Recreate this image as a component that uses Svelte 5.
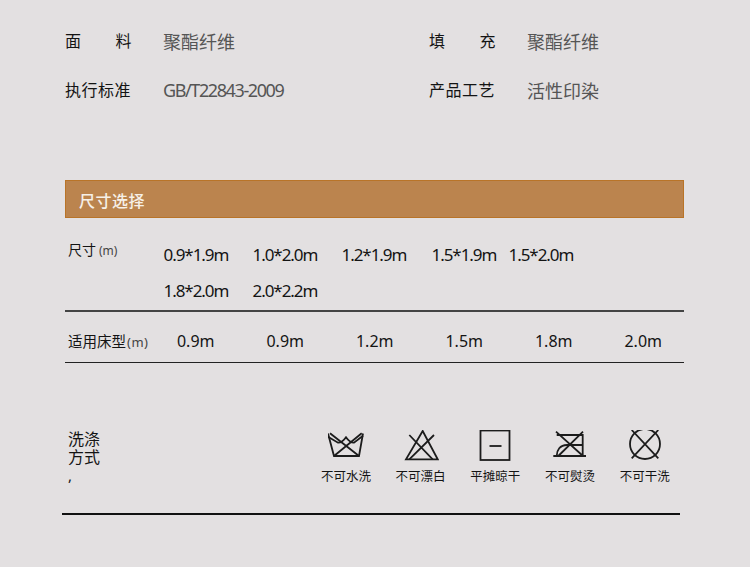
<script>
  const specs = [
    [
      { label: ["面", "料"], value: "聚酯纤维" },
      { label: ["执行标准"], value: "GB/T22843-2009", latin: true },
    ],
    [
      { label: ["填", "充"], value: "聚酯纤维" },
      { label: ["产品工艺"], value: "活性印染" },
    ],
  ];
  const sizes = ["0.9*1.9m", "1.0*2.0m", "1.2*1.9m", "1.5*1.9m", "1.5*2.0m", "1.8*2.0m", "2.0*2.2m"];
  const beds = ["0.9m", "0.9m", "1.2m", "1.5m", "1.8m", "2.0m"];
  const care = [
    { label: "不可水洗", kind: "wash" },
    { label: "不可漂白", kind: "bleach" },
    { label: "平摊晾干", kind: "dry" },
    { label: "不可熨烫", kind: "iron" },
    { label: "不可干洗", kind: "clean" },
  ];
</script>

<main class="page">
  <section class="specs">
    {#each specs as column}
      <div class="specs__column">
        {#each column as item}
          <div class="specs__row">
            <span class="specs__label">
              {#each item.label as part}
                <span>{part}</span>
              {/each}
            </span>
            <span class="specs__value" class:specs__value--latin={item.latin}>{item.value}</span>
          </div>
        {/each}
      </div>
    {/each}
  </section>

  <h2 class="bar">尺寸选择</h2>

  <section class="sizes">
    <div class="sizes__title">尺寸<small>(m)</small></div>
    <div class="sizes__grid">
      {#each sizes as size}
        <span>{size}</span>
      {/each}
    </div>
  </section>

  <section class="beds">
    <div class="beds__title">适用床型<small>(m)</small></div>
    <div class="beds__grid">
      {#each beds as bed}
        <span>{bed}</span>
      {/each}
    </div>
  </section>

  <section class="care">
    <div class="care__title">
      <div>洗涤</div>
      <div>方式</div>
      <div class="care__mark">,</div>
    </div>
    <div class="care__items">
      {#each care as item}
        <div class="care__item">
          <svg viewBox="0 0 36 32" width="36" height="32" fill="none" stroke="#1c1c1c" stroke-width="1.8" aria-hidden="true">
            {#if item.kind === "wash"}
              <path d="M0 3.500L6 26h25l4-22.500" />
              <path d="M0 6.700L10 12.700Q14 13 18 7.300Q22 13 26 12.700L35 5.700" />
              <path d="M2 3.300L31 26M33.700 3.300L6 26" />
            {:else if item.kind === "bleach"}
              <path d="M19.700 1L3 29.300h31.700z" />
              <path d="M6.300 5L29.700 29.300M31 5L6.300 29.300" />
            {:else if item.kind === "dry"}
              <rect x="3.500" y="0.500" width="29" height="29.500" />
              <path d="M12.500 16h12" />
            {:else if item.kind === "iron"}
              <path d="M1.300 26H34" />
              <path d="M4.700 26C4.700 20 8 15 15 15H30.700" />
              <path d="M4.700 5H30.700V26" />
              <path d="M4 1.700L31 26M31 1.700L6.300 26" />
            {:else}
              <circle cx="18" cy="14" r="15" />
              <path d="M4.700 0L31.300 28.300M31.300 0L4.700 28.300" />
            {/if}
          </svg>
          <span>{item.label}</span>
        </div>
      {/each}
    </div>
  </section>

  <div class="closing"></div>
</main>

<style>
  :global(body) {
    margin: 0;
    background: #e3e0e1;
  }

  .page {
    width: 750px;
    height: 567px;
    box-sizing: border-box;
    padding: 0 66px 0 65px;
    overflow: hidden;
    color: #141414;
    font-family: "Noto Sans", "Noto Sans CJK SC", sans-serif;
  }

  .specs {
    display: grid;
    grid-template-columns: 364px 1fr;
    padding-top: 28px;
  }

  .specs__column {
    display: grid;
    gap: 23px;
  }

  .specs__row {
    display: flex;
    align-items: center;
    height: 26px;
  }

  .specs__label {
    display: flex;
    justify-content: space-between;
    width: 67px;
    flex: none;
    margin-right: 31px;
    font-size: 16px;
    letter-spacing: 0.500px;
    line-height: 26px;
    white-space: nowrap;
  }

  .specs__value {
    color: #555;
    font-size: 18px;
    white-space: nowrap;
  }

  .specs__value--latin {
    letter-spacing: -1.400px;
  }

  .bar {
    height: 38px;
    box-sizing: border-box;
    margin: 77px 0 0;
    padding-left: 13px;
    border: 1px solid #b97428;
    background: #bb844e;
    color: #f6f0e8;
    font-size: 16px;
    font-weight: 500;
    letter-spacing: 0.500px;
    line-height: 40px;
  }

  .sizes {
    display: flex;
    height: 94px;
    box-sizing: border-box;
    padding-top: 20px;
    border-bottom: 2px solid #444;
  }

  .sizes__title {
    width: 98.500px;
    flex: none;
    padding-left: 3px;
    box-sizing: border-box;
    font-size: 14px;
    line-height: 24px;
  }

  small {
    margin-left: 3px;
    color: #444;
    font-size: 12px;
  }

  .sizes__grid {
    display: grid;
    grid-template-columns: 89px 89px 90px 77px auto;
    grid-auto-rows: 36px;
    font-size: 17px;
    letter-spacing: -1.050px;
    line-height: 34px;
  }

  .beds {
    display: flex;
    height: 51px;
    box-sizing: border-box;
    align-items: center;
    padding-top: 7px;
    border-bottom: 1px solid #222;
  }

  .beds__title {
    width: 86px;
    flex: none;
    padding-left: 3px;
    box-sizing: border-box;
    font-size: 14.500px;
    white-space: nowrap;
  }

  .beds__title small {
    margin-left: 1px;
    font-size: 13px;
    letter-spacing: 0.500px;
  }

  .beds__grid {
    display: grid;
    grid-template-columns: repeat(6, 89.500px);
    flex: none;
    font-size: 16px;
    text-align: center;
  }

  .care {
    display: flex;
    justify-content: space-between;
    height: 83px;
    padding-top: 67px;
  }

  .care__title {
    padding-left: 3px;
    font-size: 16px;
    line-height: 18px;
  }

  .care__mark {
    font-size: 15px;
  }

  .care__items {
    display: grid;
    grid-template-columns: repeat(5, 74.700px);
    margin-right: 2px;
  }

  .care__item {
    display: flex;
    flex-direction: column;
    align-items: center;
    gap: 4px;
    font-size: 12.500px;
    white-space: nowrap;
  }

  .closing {
    height: 2px;
    margin: 0 4px 0 -3px;
    background: #111;
  }
</style>
